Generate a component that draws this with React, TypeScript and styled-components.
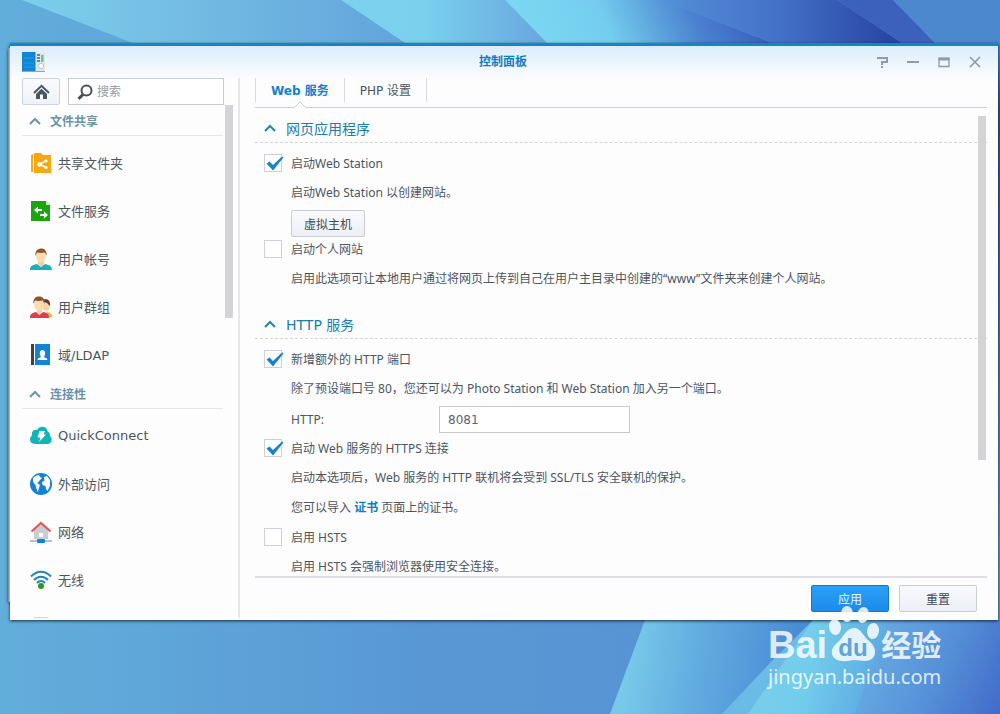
import React from "react";
import styled, { createGlobalStyle, css } from "styled-components";

const GlobalStyle = createGlobalStyle`
  * { box-sizing: border-box; }
  html, body { margin: 0; height: 100%; }
  body {
    font-family: "DejaVu Sans", "Noto Sans CJK SC", sans-serif;
    font-size: 12px;
    color: #4b555f;
    overflow: hidden;
  }
  button, input { font-family: inherit; }
  h1, h2, p, ul { margin: 0; padding: 0; }
`;

/* ---------- desktop ---------- */

const Desktop = styled.div`
  position: relative;
  display: flex;
  height: 100vh;
  padding: 43px 2px 94px 10px;
  background: #5a9dd8;
`;

const WallpaperSvg = styled.svg`
  position: absolute;
  inset: 0;
  width: 100%;
  height: 100%;
`;

const BackWindow = styled.div`
  position: absolute;
  left: 8px;
  top: 48px;
  bottom: 112px;
  width: 200px;
  background: #eef3f8;
  border-left: 1px solid #8fa9c0;
  box-shadow: 0 1px 3px rgba(0, 30, 60, 0.7);
`;

const Window = styled.section`
  position: relative;
  flex: 1;
  min-width: 0;
  display: flex;
  flex-direction: column;
  border-top: 3px solid #1884c8;
  background: linear-gradient(#dbecfb, #fdfdfe 34px);
  box-shadow: 0 1px 3px rgba(0, 25, 50, 0.85);
`;

const TitleBar = styled.header`
  display: grid;
  grid-template-columns: 1fr auto 1fr;
  align-items: center;
  height: 32px;
  padding: 0 14px 0 12px;
  flex: none;
`;

const Title = styled.h1`
  font-size: 12px;
  line-height: 16px;
  font-weight: 700;
  color: #0f7cc0;
`;

const WindowControls = styled.div`
  display: flex;
  justify-content: flex-end;
  gap: 13px;
`;

const ControlButton = styled.button`
  display: flex;
  width: 18px;
  height: 18px;
  padding: 2px;
  border: 0;
  background: none;
  color: #8e9aa8;
`;

const Body = styled.div`
  flex: 1;
  min-height: 0;
  display: flex;
`;

/* ---------- sidebar ---------- */

const Sidebar = styled.nav`
  position: relative;
  width: 230px;
  flex: none;
  display: flex;
  flex-direction: column;
  border-right: 2px solid #e6e6ec;
  margin-bottom: 2px;
`;

const SearchRow = styled.div`
  display: flex;
  gap: 8px;
  padding: 0 14px 0 12px;
`;

const HomeButton = styled.button`
  display: flex;
  align-items: center;
  justify-content: center;
  flex: none;
  width: 38px;
  height: 27px;
  padding: 0;
  border: 1px solid #cdd3de;
  border-radius: 2px;
  background: linear-gradient(#fbfcfe, #eef1f7);
`;

const SearchBox = styled.label`
  flex: 1;
  min-width: 0;
  display: flex;
  align-items: center;
  gap: 4px;
  height: 27px;
  padding-left: 8px;
  border: 1px solid #c6ccd2;
  background: #fff;
`;

const SearchInput = styled.input`
  flex: 1;
  min-width: 0;
  padding: 0;
  border: 0;
  outline: 0;
  background: none;
  font-size: 12px;
  &::placeholder { color: #949ba2; }
`;

const NavScroll = styled.div`
  flex: 1;
  min-height: 0;
  overflow: hidden;
  padding-top: 1px;
`;

const GroupHeading = styled.h2`
  display: flex;
  align-items: center;
  gap: 9px;
  height: 30px;
  margin: 0 15px 3px 12px;
  padding-left: 7px;
  border-bottom: 1px solid #e4e9ee;
  font-size: 12px;
  font-weight: 700;
  color: #6a93ab;
`;

const NavList = styled.ul`
  list-style: none;
`;

const NavLink = styled.a`
  display: flex;
  align-items: center;
  gap: 6px;
  height: 48px;
  padding-left: 20px;
  font-size: 13px;
  color: #4b555f;
  text-decoration: none;
`;

const NavLabel = styled.span`
  padding-bottom: 2px;
`;

const Thumb = styled.div<{ $side?: boolean }>`
  position: absolute;
  width: 8px;
  background: #d4d4d8;
  ${(p) =>
    p.$side
      ? css`top: 27px; right: 5px; height: 213px;`
      : css`top: 8px; right: 1px; height: 344px;`}
`;

/* ---------- main panel ---------- */

const Main = styled.main`
  flex: 1;
  min-width: 0;
  display: flex;
  flex-direction: column;
  padding: 0 11px 0 15px;
`;

const TabBar = styled.div`
  display: flex;
  align-items: flex-start;
  flex: none;
  height: 30px;
  border-bottom: 1px solid #cdced6;
`;

const Tab = styled.button<{ $active?: boolean }>`
  position: relative;
  height: 24px;
  padding: 0 15px 2px;
  border: 0;
  border-right: 1px solid #d6d7df;
  background: none;
  font-size: 12px;
  font-weight: ${(p) => (p.$active ? 700 : 400)};
  color: ${(p) => (p.$active ? "#1480cc" : "#4b555f")};
  &:first-child { border-left: 1px solid #d6d7df; }
`;

const TabPointer = styled.svg`
  position: absolute;
  left: 50%;
  top: 23px;
  width: 12px;
  height: 7px;
  margin-left: -6px;
`;

const ScrollArea = styled.div`
  position: relative;
  flex: 1;
  min-height: 0;
  overflow: hidden;
  padding-top: 9px;
  font-family: "Noto Sans", "Noto Sans CJK SC", sans-serif;
`;

const Section = styled.section`
  margin-bottom: 17px;
`;

const SectionHeading = styled.h2`
  display: flex;
  align-items: center;
  gap: 10px;
  height: 26px;
  margin-bottom: 8px;
  padding: 0 0 3px 9px;
  border-bottom: 1px dashed #d5d3dc;
  font-family: "DejaVu Sans", "Noto Sans CJK SC", sans-serif;
  font-size: 14px;
  font-weight: 400;
  color: #1a7ea8;
`;

const CheckRow = styled.label`
  display: flex;
  align-items: center;
  gap: 9px;
  height: 24px;
  padding-left: 9px;
`;

const CheckCell = styled.span`
  display: grid;
  width: 18px;
  height: 18px;
  & > * { grid-area: 1 / 1; }
`;

const CheckInput = styled.input`
  appearance: none;
  width: 18px;
  height: 18px;
  margin: 0;
  border: 1px solid #cfcfdb;
  background: #fff;
`;

const CheckMark = styled.svg`
  width: 20px;
  height: 18px;
  overflow: visible;
  pointer-events: none;
`;

const Hints = styled.div`
  padding: 3px 0 2px 36px;
  line-height: 30px;
`;

const InlineLink = styled.a`
  color: #0a7fc2;
  font-weight: 700;
  text-decoration: none;
`;

const Button = styled.button<{ $primary?: boolean }>`
  height: 27px;
  padding: 0 12px;
  border-radius: 2px;
  font-size: 12px;
  border: 1px solid ${(p) => (p.$primary ? "#1579c8" : "#c9cdd9")};
  background: ${(p) =>
    p.$primary ? "linear-gradient(#2ca0f5, #1b8bea)" : "linear-gradient(#f9fafd, #eceff5)"};
  color: ${(p) => (p.$primary ? "#e6f8ff" : "#414b55")};
`;

const ButtonRow = styled.div`
  display: flex;
  padding-left: 36px;
`;

const FieldRow = styled.div`
  display: grid;
  grid-template-columns: 148px 191px;
  align-items: center;
  padding: 0 0 3px 36px;
`;

const TextInput = styled.input`
  height: 27px;
  width: 100%;
  padding: 0 8px;
  border: 1px solid #c8c8d0;
  background: #fff;
  font-family: "DejaVu Sans", sans-serif;
  font-size: 12px;
  color: #5a646e;
`;

const Footer = styled.footer`
  display: flex;
  justify-content: flex-end;
  align-items: flex-start;
  gap: 10px;
  flex: none;
  height: 44px;
  margin-top: 3px;
  padding: 7px 10px 0 0;
  border-top: 2px solid #dedfe4;
  & > button { width: 78px; }
`;

/* ---------- watermark ---------- */

const Watermark = styled.div`
  position: absolute;
  right: 54px;
  bottom: 22px;
  display: flex;
  flex-direction: column;
  width: 178px;
  color: rgba(255, 255, 255, 0.82);
  white-space: nowrap;
`;

const Brand = styled.div`
  display: flex;
  align-items: flex-end;
  height: 57px;
  font: 700 38px/34px "Liberation Sans", sans-serif;
`;

const BrandCjk = styled.span`
  padding-bottom: 4px;
  font: 700 30px/30px "Noto Sans CJK SC", sans-serif;
`;

const Paw = styled.svg`
  width: 54px;
  height: 57px;
  flex: none;
`;

const Site = styled.div`
  font: 400 20px/30px "Noto Sans", sans-serif;
`;

/* ---------- drawings ---------- */

const Wallpaper = () => (
  <WallpaperSvg viewBox="0 0 1000 714" preserveAspectRatio="none" aria-hidden="true">
    <defs>
      <linearGradient id="base"><stop offset="0" stopColor="#62aedb" /><stop offset=".45" stopColor="#5896d4" /><stop offset="1" stopColor="#5590d2" /></linearGradient>
      <linearGradient id="b1"><stop offset="0" stopColor="#7bd0ea" /><stop offset=".4" stopColor="#74bde4" /><stop offset="1" stopColor="#62a5db" /></linearGradient>
      <linearGradient id="b2"><stop offset="0" stopColor="#7bd2ee" /><stop offset=".4" stopColor="#7ad0ed" /><stop offset="1" stopColor="#68a6df" /></linearGradient>
      <linearGradient id="b3" gradientUnits="userSpaceOnUse" x1="520" y1="30" x2="735" y2="-60"><stop offset="0" stopColor="#7bd8f1" /><stop offset=".35" stopColor="#74cdee" /><stop offset=".7" stopColor="#4b83d0" /><stop offset="1" stopColor="#355bbb" /></linearGradient>
      <linearGradient id="b4"><stop offset="0" stopColor="#5390d8" /><stop offset=".5" stopColor="#4370c6" /><stop offset="1" stopColor="#2542a1" /></linearGradient>
      <linearGradient id="c1" gradientUnits="userSpaceOnUse" x1="628" y1="665" x2="790" y2="690"><stop offset="0" stopColor="#78c8ea" /><stop offset=".4" stopColor="#62ade0" /><stop offset="1" stopColor="#4a8cd5" /></linearGradient>
      <linearGradient id="c2" gradientUnits="userSpaceOnUse" x1="760" y1="660" x2="880" y2="690"><stop offset="0" stopColor="#7bcdea" /><stop offset=".4" stopColor="#72cdec" /><stop offset="1" stopColor="#5aa8e0" /></linearGradient>
      <linearGradient id="c3" gradientUnits="userSpaceOnUse" x1="870" y1="640" x2="1010" y2="700"><stop offset="0" stopColor="#67abe2" /><stop offset=".5" stopColor="#5590d8" /><stop offset="1" stopColor="#4069c8" /></linearGradient>
      <linearGradient id="edge" x1="0" y1="0" x2="0" y2="1"><stop offset="0" stopColor="#4a86cd" /><stop offset=".12" stopColor="#2e4a8c" /><stop offset=".5" stopColor="#3f6fa8" /><stop offset="1" stopColor="#5f9fc0" /></linearGradient>
    </defs>
    <rect width="1000" height="714" fill="url(#base)" />
    <path d="M22 0H341L405 43H133Z" fill="url(#b1)" />
    <path d="M341 0H505L547 43H405Z" fill="url(#b2)" />
    <path d="M505 0H662L772 43H547Z" fill="url(#b3)" />
    <path d="M662 0H837L902 43H772Z" fill="url(#b4)" />
    <path d="M837 0H893L935 43H902Z" fill="#3c61bd" />
    <path d="M893 0H1000V43H935Z" fill="#4b88ce" />
    <rect x="996" y="43" width="4" height="577" fill="url(#edge)" />
    <path d="M645 620H1000V714H610Z" fill="url(#c1)" />
    <path d="M813 620H890L855 714H722L768 665Z" fill="#6bbbe6" />
    <path d="M813 620H890L855 714H748Z" fill="url(#c2)" />
    <path d="M888 620H1000V714H855Z" fill="url(#c3)" />
  </WallpaperSvg>
);

const Chevron = ({ color, width = 2 }: { color: string; width?: number }) => (
  <svg width="12" height="8" viewBox="0 0 12 8" fill="none" stroke={color} strokeWidth={width} aria-hidden="true">
    <path d="M1 7L6 2L11 7" />
  </svg>
);

const AppIcon = () => (
  <svg width="24" height="20" viewBox="0 0 24 20" aria-hidden="true">
    <path d="M13 1H23V19H13Z" fill="#dfe6ec" />
    <path d="M0 0H13.5V19H0Z" fill="#0f86d6" />
    <path d="M2 6H12M2 11H12M2 15H12" stroke="#2f99e2" />
    <path d="M15 3H18M15 6H18M15 9H18" stroke="#51606c" strokeWidth="1.6" />
    <path d="M19 3H21.5V10H19Z" fill="#72b9a6" />
    <circle cx="19" cy="14" r="2.6" fill="#fff" stroke="#bcc6cf" />
    <path d="M0 19.5H23" stroke="#8fa7b8" />
  </svg>
);

const HomeIcon = () => (
  <svg width="17" height="16" viewBox="0 0 17 16" aria-hidden="true">
    <path d="M1 9L8.500 1.800L16 9" fill="none" stroke="#4a5660" strokeWidth="2" />
    <path d="M3 10L8.500 4.800L14 10V15H3Z" fill="#4a5660" />
    <path d="M7 15V10.500H10V15Z" fill="#fff" />
  </svg>
);

const SearchIcon = () => (
  <svg width="16" height="16" viewBox="0 0 16 16" fill="none" stroke="#46505a" aria-hidden="true">
    <circle cx="9.500" cy="6.500" r="5" strokeWidth="2" />
    <path d="M6 10.500L1.500 14.800" strokeWidth="3" />
  </svg>
);

const icons: Record<string, React.ReactNode> = {
  share: (
    <>
      <path d="M1 3L3 2V20H1Z" fill="#f6b01c" />
      <path d="M4 1H11L13 3H21V21H4Z" fill="#f5a90f" />
      <path d="M16.500 8.500L9.500 12.500L16.500 15.500" stroke="#fff" strokeWidth="1.500" fill="none" />
      <circle cx="16" cy="9" r="1.600" fill="#fff" /><circle cx="9.500" cy="12.500" r="2.200" fill="#fff" /><circle cx="16" cy="15.500" r="1.600" fill="#fff" />
    </>
  ),
  file: (
    <>
      <path d="M1 1H16L20 5V21H1Z" fill="#1ea313" />
      <path d="M16 1L20 5H16Z" fill="#d7f0d2" />
      <path d="M4 10L8 6.500V9H12V11H8V13.500ZM18 15L14 11.500V14H10V16H14V18.500Z" fill="#fff" />
    </>
  ),
  user: (
    <>
      <path d="M0 22C0 17 4 17 7 16L11 19L15 16C18 17 22 17 22 22Z" fill="#1cb1b5" />
      <path d="M8 12H14V16L11 19L8 16Z" fill="#f6cfa0" />
      <ellipse cx="11" cy="8" rx="5" ry="6.500" fill="#fbdcb2" />
      <path d="M5.500 8C5 3 7 1 11 0.500C15 0.500 17 3 16.500 8L15 4.500C12 5 9 5 7 4.500Z" fill="#8a5630" />
    </>
  ),
  group: (
    <>
      <path d="M13 22V17L18 16C21 17 22 18 22 21Z" fill="#f2bb45" />
      <ellipse cx="16" cy="9" rx="4" ry="6" fill="#f7d2a2" />
      <path d="M12 5C16 1 21 4 20 10L17 7Z" fill="#54402f" />
      <path d="M0 22C0 17 3 17 6 16L9.500 19L13 16C16 17 19 17 19 22Z" fill="#dc3e50" />
      <path d="M7 12H12V16L9.500 18L7 16Z" fill="#f6cfa0" />
      <ellipse cx="9" cy="8.500" rx="5" ry="6.500" fill="#fbdcb2" />
      <path d="M3.500 8C3 3 5 0.500 9 0.500C13 0.500 15 3 14.500 8L13 4.500C10 5 7 5 5 4.500Z" fill="#8a5630" />
    </>
  ),
  ldap: (
    <>
      <path d="M1 0H4V21H1Z" fill="#38434d" />
      <path d="M5 0H20V21H5Z" fill="#1284d4" />
      <path d="M7.500 16C8 13.500 10 14 11 13C9 10 9.500 6 12.500 6C15.500 6 16 10 14 13C15 14 17 13.500 17.500 16Z" fill="#fff" />
    </>
  ),
  cloud: (
    <>
      <path d="M5 19C-1 19-1 12 2 10.500C1 6 5 4 7 5C10 0 17 1 18 7C20 7 20 10 20 11C23 13 22 19 17 19Z" fill="#12b5b6" />
      <path d="M9.500 6H15L13.500 9.500H16L9 17L10.500 12.500H7.500Z" fill="#fff" />
    </>
  ),
  globe: (
    <>
      <circle cx="11" cy="11" r="11" fill="#1480d6" />
      <path d="M3 5C5 3 7 2 9 2L10 4L12 5L10 7L8.500 9L7 10L10 12L9 15L8 19L6.500 16L5.500 12L3 9Z" fill="#fff" />
      <path d="M14 4L17 3L20 7V13L17.500 18L16 16L15.500 13L12.500 12L12 9L14.500 7.500Z" fill="#fff" />
    </>
  ),
  network: (
    <>
      <path d="M4 9L11 3L18 9V18H4Z" fill="#c7ccd5" />
      <path d="M1.500 10.500L11 2L20.500 10.500" fill="none" stroke="#dd5a52" strokeWidth="2.200" />
      <path d="M9 12H13V16H9Z" fill="#fff" />
      <path d="M0 20H22" stroke="#a4adb8" strokeWidth="1.500" />
      <rect x="7" y="18" width="8" height="4" rx="1" fill="#1480d6" />
    </>
  ),
  wifi: (
    <>
      <g fill="none" stroke="#2184bd" strokeWidth="2">
        <path d="M1 7.500C7 1 15 1 21 7.500" /><path d="M4 11C8 6.500 14 6.500 18 11" /><path d="M7 14C9.500 11.500 12.500 11.500 15 14" />
      </g>
      <circle cx="11" cy="17" r="3" fill="#259b24" />
    </>
  ),
  clock: <rect x="3" width="16" height="22" rx="2" fill="#f2d878" />,
};

const NavIcon = ({ name }: { name: string }) => (
  <svg width="22" height="22" viewBox="0 0 22 22" aria-hidden="true">{icons[name]}</svg>
);

/* ---------- composition ---------- */

const groups = [
  {
    title: "文件共享",
    items: [
      ["share", "共享文件夹"],
      ["file", "文件服务"],
      ["user", "用户帐号"],
      ["group", "用户群组"],
      ["ldap", "域/LDAP"],
    ],
  },
  {
    title: "连接性",
    items: [
      ["cloud", "QuickConnect"],
      ["globe", "外部访问"],
      ["network", "网络"],
      ["wifi", "无线"],
      ["clock", ""],
    ],
  },
];

const Check = ({ label, checked }: { label: string; checked?: boolean }) => {
  const [on, setOn] = React.useState(!!checked);
  return (
    <CheckRow>
      <CheckCell>
        <CheckInput type="checkbox" checked={on} onChange={() => setOn(!on)} />
        {on && (
          <CheckMark viewBox="0 0 20 18" aria-hidden="true">
            <path d="M2.500 9.500L5.500 7.500L9 11L18 2.500L19.500 3.500L9 16.500Z" fill="#1782cc" />
          </CheckMark>
        )}
      </CheckCell>
      {label}
    </CheckRow>
  );
};

export default function App() {
  return (
    <Desktop lang="zh-CN">
      <GlobalStyle />
      <Wallpaper />
      <BackWindow />
      <Window>
        <TitleBar>
          <AppIcon />
          <Title>控制面板</Title>
          <WindowControls>
            <ControlButton aria-label="帮助">
              <svg width="14" height="14" fill="none" stroke="currentColor" strokeWidth="2" aria-hidden="true"><path d="M2 3H12V7H7V10M7 11V13" /></svg>
            </ControlButton>
            <ControlButton aria-label="最小化">
              <svg width="14" height="14" stroke="currentColor" strokeWidth="2" aria-hidden="true"><path d="M1 7H13" /></svg>
            </ControlButton>
            <ControlButton aria-label="最大化">
              <svg width="14" height="14" fill="none" stroke="currentColor" aria-hidden="true"><path d="M2 3.500H12V11.500H2Z" strokeWidth="1.300" /><path d="M1.500 4H12.500" strokeWidth="3" /></svg>
            </ControlButton>
            <ControlButton aria-label="关闭">
              <svg width="14" height="14" stroke="currentColor" strokeWidth="1.600" aria-hidden="true"><path d="M2 2L12 12M12 2L2 12" /></svg>
            </ControlButton>
          </WindowControls>
        </TitleBar>
        <Body>
          <Sidebar>
            <SearchRow>
              <HomeButton aria-label="主页"><HomeIcon /></HomeButton>
              <SearchBox>
                <SearchIcon />
                <SearchInput type="text" placeholder="搜索" aria-label="搜索" />
              </SearchBox>
            </SearchRow>
            <NavScroll>
              {groups.map((g) => (
                <div key={g.title}>
                  <GroupHeading><Chevron color="#6f93a8" />{g.title}</GroupHeading>
                  <NavList>
                    {g.items.map(([icon, label]) => (
                      <li key={icon}>
                        <NavLink href="#"><NavIcon name={icon} /><NavLabel>{label}</NavLabel></NavLink>
                      </li>
                    ))}
                  </NavList>
                </div>
              ))}
            </NavScroll>
            <Thumb $side />
          </Sidebar>
          <Main>
            <TabBar>
              <Tab $active>
                Web 服务
                <TabPointer viewBox="0 0 12 7" aria-hidden="true">
                  <path d="M0 7L6 1L12 7" fill="#fff" stroke="#cdced6" />
                </TabPointer>
              </Tab>
              <Tab>PHP 设置</Tab>
            </TabBar>
            <ScrollArea>
              <Section>
                <SectionHeading><Chevron color="#1f84b4" />网页应用程序</SectionHeading>
                <Check checked label="启动Web Station" />
                <Hints><p>启动Web Station 以创建网站。</p></Hints>
                <ButtonRow><Button>虚拟主机</Button></ButtonRow>
                <Check label="启动个人网站" />
                <Hints><p>启用此选项可让本地用户通过将网页上传到自己在用户主目录中创建的“www”文件夹来创建个人网站。</p></Hints>
              </Section>
              <Section>
                <SectionHeading><Chevron color="#1f84b4" />HTTP 服务</SectionHeading>
                <Check checked label="新增额外的 HTTP 端口" />
                <Hints><p>除了预设端口号 80，您还可以为 Photo Station 和 Web Station 加入另一个端口。</p></Hints>
                <FieldRow>
                  <label htmlFor="http-port">HTTP:</label>
                  <TextInput id="http-port" defaultValue="8081" />
                </FieldRow>
                <Check checked label="启动 Web 服务的 HTTPS 连接" />
                <Hints>
                  <p>启动本选项后，Web 服务的 HTTP 联机将会受到 SSL/TLS 安全联机的保护。</p>
                  <p>您可以导入 <InlineLink href="#">证书</InlineLink> 页面上的证书。</p>
                </Hints>
                <Check label="启用 HSTS" />
                <Hints><p>启用 HSTS 会强制浏览器使用安全连接。</p></Hints>
              </Section>
              <Thumb />
            </ScrollArea>
            <Footer>
              <Button $primary>应用</Button>
              <Button>重置</Button>
            </Footer>
          </Main>
        </Body>
      </Window>
      <Watermark>
        <Brand>
          Bai
          <Paw viewBox="0 0 54 57" aria-hidden="true">
            <g fill="#fff" fillOpacity=".82">
              <ellipse cx="8" cy="22" rx="6" ry="8" transform="rotate(-8 8 22)" />
              <ellipse cx="20" cy="9" rx="6" ry="8" />
              <ellipse cx="36" cy="10" rx="6" ry="8" transform="rotate(10 36 10)" />
              <ellipse cx="46" cy="26" rx="6" ry="8" transform="rotate(8 46 26)" />
              <path d="M27 23C34 23 36 31 42 36C52 44 49 56 38 56C34 56 31 55 27 55C23 55 20 57 15 56C3 55 2 44 10 38C17 32 19 23 27 23Z" />
            </g>
            <text x="26" y="51" textAnchor="middle" fontFamily="Liberation Sans" fontWeight="700" fontSize="24" fill="#5ba6dc">du</text>
          </Paw>
          <BrandCjk>经验</BrandCjk>
        </Brand>
        <Site>jingyan.baidu.com</Site>
      </Watermark>
    </Desktop>
  );
}
